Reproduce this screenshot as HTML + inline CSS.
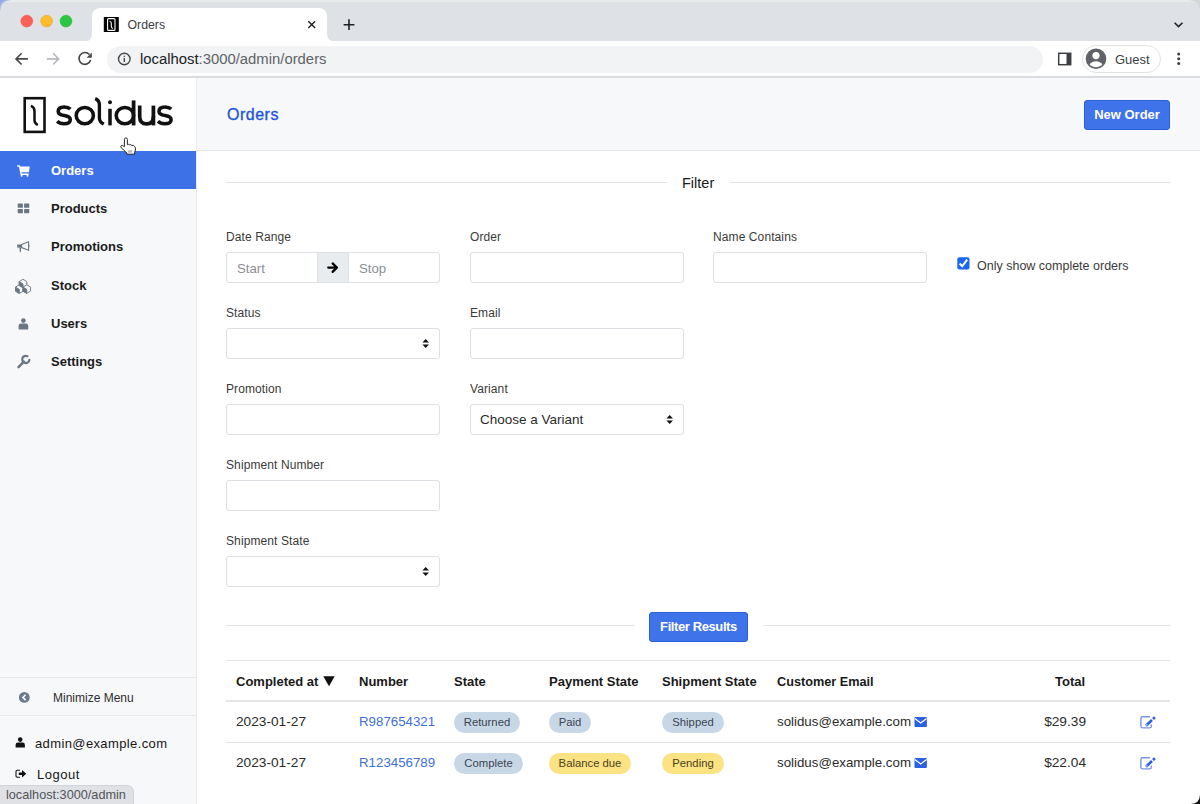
<!DOCTYPE html>
<html><head><meta charset="utf-8">
<style>
*{box-sizing:border-box;margin:0;padding:0}
html,body{width:1200px;height:804px;overflow:hidden;background:#fff;font-family:"Liberation Sans",sans-serif;color:#222}
.a{position:absolute;white-space:nowrap}
#tabbar{left:0;top:0;width:1200px;height:42px;background:#dee1e6}
#tab{left:92px;top:8px;width:235px;height:34px;background:#fff;border-radius:8px 8px 0 0}
#toolbar{left:0;top:41px;width:1200px;height:36px;background:#fff;border-bottom:1px solid #d3d5d8}
#omni{left:107px;top:46px;width:936px;height:27px;background:#f1f3f4;border-radius:14px}
#sidebar{left:0;top:77px;width:197px;height:727px;background:#f7f8fa;border-right:1px solid #e8eaed}
#logo{left:0;top:77px;width:196px;height:74px;background:#fff}
#nav-active{left:0;top:151px;width:196px;height:38px;background:#3d71e8}
.nav{position:absolute;left:51px;font-size:13px;font-weight:bold;color:#1b1b1b;line-height:15px}
#header{left:197px;top:77px;width:1003px;height:74px;background:#f7f8fa;border-bottom:1px solid #e4e6e9}
.lbl{position:absolute;font-size:12px;letter-spacing:0.1px;color:#3a3a3a;line-height:14px}
.inp{position:absolute;height:31px;width:214px;border:1px solid #dcdfe3;border-radius:3px;background:#fff}
.hr{position:absolute;height:1px;background:#e3e5e8}
.btn{position:absolute;background:#3f73e9;border:1px solid #2b5fd8;border-radius:3px;color:#fff;font-weight:bold;font-size:13px;text-align:center}
.th{position:absolute;margin-top:-1px;font-size:13px;font-weight:bold;color:#1a1a1a;line-height:15px}
.td{position:absolute;font-size:13.7px;color:#2b2b2b;line-height:16px}
.pill{position:absolute;height:21px;border-radius:11px;font-size:11.3px;color:#3a4552;text-align:center;line-height:21px;background:#c8d7e6}
.yel{background:#fbe283;color:#4a4220}
.lnk{color:#3f6fd8}
svg{position:absolute;left:0;top:0}
</style></head><body>
<div id="tabbar" class="a"></div>
<div class="a" style="left:0;top:0;width:1200px;height:2px;background:#e9eaec"></div>
<div id="tab" class="a"></div>
<div id="toolbar" class="a"></div>
<div id="omni" class="a"></div>
<div class="a" style="left:1082px;top:45px;width:79px;height:28px;border:1px solid #e3e3e3;border-radius:14px;background:#fff"></div>
<div class="a" style="left:127.5px;top:17.5px;font-size:12.3px;color:#3c4043;line-height:15px">Orders</div>
<div class="a" style="left:140px;top:51px;font-size:14.85px;color:#202124;line-height:17px">localhost<span style="color:#5f6368">:3000/admin/orders</span></div>
<div class="a" style="left:1115px;top:52px;font-size:13px;color:#3c4043;line-height:15px">Guest</div>

<div id="sidebar" class="a"></div>
<div id="logo" class="a"></div>
<div id="nav-active" class="a"></div>
<div class="nav" style="top:163px;color:#fff">Orders</div>
<div class="nav" style="top:201px">Products</div>
<div class="nav" style="top:239px">Promotions</div>
<div class="nav" style="top:278px">Stock</div>
<div class="nav" style="top:316px">Users</div>
<div class="nav" style="top:354px">Settings</div>
<div class="hr" style="left:0;top:677px;width:196px;background:#e6e8eb"></div>
<div class="hr" style="left:0;top:715px;width:196px;background:#e6e8eb"></div>
<div class="a" style="left:53px;top:691px;font-size:12px;color:#2e2e2e;line-height:14px">Minimize Menu</div>
<div class="a" style="left:35px;top:735.5px;font-size:13px;letter-spacing:0.38px;color:#161616;line-height:16px">admin@example.com</div>
<div class="a" style="left:37px;top:766.5px;font-size:13px;letter-spacing:0.5px;color:#161616;line-height:16px">Logout</div>

<div id="header" class="a"></div>
<div class="a" style="left:0;top:76px;width:1200px;height:2px;background:#d9dbde"></div>
<div class="a" style="left:227px;top:105px;font-size:16px;letter-spacing:0.5px;color:#1d55d4;line-height:19px;-webkit-text-stroke:0.35px #1d55d4">Orders</div>
<div class="btn" style="left:1084px;top:100px;width:86px;height:30px;line-height:28px">New Order</div>

<div class="hr" style="left:226px;top:182px;width:441px"></div>
<div class="a" style="left:682px;top:175px;font-size:14.5px;color:#1a1a1a;line-height:17px">Filter</div>
<div class="hr" style="left:730px;top:182px;width:440px"></div>

<div class="lbl" style="left:226px;top:230px">Date Range</div>
<div class="inp" style="left:226px;top:252px"></div>
<div class="a" style="left:317px;top:253px;width:32px;height:29px;background:#e9ecef;border-left:1px solid #dfe2e6;border-right:1px solid #dfe2e6"></div>
<div class="a" style="left:237px;top:261px;font-size:13.2px;color:#8a9096;line-height:15px">Start</div>
<div class="a" style="left:359px;top:261px;font-size:13.2px;color:#8a9096;line-height:15px">Stop</div>
<div class="lbl" style="left:470px;top:230px">Order</div>
<div class="inp" style="left:470px;top:252px"></div>
<div class="lbl" style="left:713px;top:230px">Name Contains</div>
<div class="inp" style="left:713px;top:252px"></div>
<div class="a" style="left:977px;top:259px;font-size:12.5px;color:#3a3a3a;line-height:14px">Only show complete orders</div>

<div class="lbl" style="left:226px;top:306px">Status</div>
<div class="inp" style="left:226px;top:328px"></div>
<div class="lbl" style="left:470px;top:306px">Email</div>
<div class="inp" style="left:470px;top:328px"></div>

<div class="lbl" style="left:226px;top:382px">Promotion</div>
<div class="inp" style="left:226px;top:404px"></div>
<div class="lbl" style="left:470px;top:382px">Variant</div>
<div class="inp" style="left:470px;top:404px"></div>
<div class="a" style="left:480px;top:412px;font-size:13.5px;color:#2b2b2b;line-height:16px">Choose a Variant</div>

<div class="lbl" style="left:226px;top:458px">Shipment Number</div>
<div class="inp" style="left:226px;top:480px"></div>
<div class="lbl" style="left:226px;top:534px">Shipment State</div>
<div class="inp" style="left:226px;top:556px"></div>

<div class="hr" style="left:226px;top:625px;width:408px"></div>
<div class="btn" style="left:649px;top:612px;width:99px;height:30px;line-height:28px;letter-spacing:-0.4px">Filter Results</div>
<div class="hr" style="left:763px;top:625px;width:407px"></div>

<div class="hr" style="left:226px;top:660px;width:944px"></div>
<div class="th" style="left:236px;top:675px">Completed at</div>
<div class="th" style="left:359px;top:675px">Number</div>
<div class="th" style="left:454px;top:675px">State</div>
<div class="th" style="left:549px;top:675px">Payment State</div>
<div class="th" style="left:662px;top:675px">Shipment State</div>
<div class="th" style="left:777px;top:675.5px;font-size:12.7px">Customer Email</div>
<div class="th" style="left:1055px;top:675px">Total</div>
<div class="hr" style="left:226px;top:700px;width:944px;height:2px"></div>
<div class="hr" style="left:226px;top:742px;width:944px"></div>

<div class="td" style="left:236px;top:714px">2023-01-27</div>
<div class="td lnk" style="left:359px;top:714px;font-size:13.3px">R987654321</div>
<div class="pill" style="left:454px;top:712px;width:66px">Returned</div>
<div class="pill" style="left:549px;top:712px;width:42px">Paid</div>
<div class="pill" style="left:662px;top:712px;width:62px">Shipped</div>
<div class="td" style="left:777px;top:714px;font-size:13.3px">solidus@example.com</div>
<div class="td" style="left:1026px;top:714px;width:60px;text-align:right">$29.39</div>

<div class="td" style="left:236px;top:755px">2023-01-27</div>
<div class="td lnk" style="left:359px;top:755px;font-size:13.3px">R123456789</div>
<div class="pill" style="left:454px;top:753px;width:69px">Complete</div>
<div class="pill yel" style="left:549px;top:753px;width:82px">Balance due</div>
<div class="pill yel" style="left:662px;top:753px;width:62px">Pending</div>
<div class="td" style="left:777px;top:755px;font-size:13.3px">solidus@example.com</div>
<div class="td" style="left:1026px;top:755px;width:60px;text-align:right">$22.04</div>

<!--SVG1-->
<svg width="1200" height="804" viewBox="0 0 1200 804">
<!-- traffic lights -->
<circle cx="26.8" cy="21.1" r="5.9" fill="#fe5f57" stroke="#e2463f" stroke-width="0.5"/>
<circle cx="46.6" cy="21.1" r="5.9" fill="#febc2e" stroke="#e1a116" stroke-width="0.5"/>
<circle cx="66" cy="21.1" r="5.9" fill="#28c840" stroke="#1aab29" stroke-width="0.5"/>
<!-- favicon -->
<rect x="103.8" y="17" width="15" height="15" fill="#000"/>
<rect x="107.6" y="18.6" width="7.4" height="11.8" rx="1" fill="none" stroke="#fff" stroke-width="1.1"/>
<path d="M109.6 21.2 Q111.3 21.6 111.3 23.2 V26.6 Q111.3 27.8 112.8 28.4" fill="none" stroke="#fff" stroke-width="1.1"/>
<!-- tab close & new tab -->
<path d="M308.3 21.3 L315.1 28.1 M315.1 21.3 L308.3 28.1" stroke="#202124" stroke-width="1.4"/>
<path d="M349 19.3 V30.1 M343.6 24.7 H354.4" stroke="#202124" stroke-width="1.6"/>
<!-- tab strip chevron -->
<path d="M1174.6 22.7 L1178.5 26.6 L1182.5 22.7" fill="none" stroke="#202124" stroke-width="1.6"/>
<!-- back / forward / reload -->
<path d="M27.9 58.9 H16.6 M21.6 53.3 L16 58.9 L21.6 64.5" fill="none" stroke="#474747" stroke-width="1.6"/>
<path d="M46.8 58.9 H58.1 M53.1 53.3 L58.7 58.9 L53.1 64.5" fill="none" stroke="#b7b9bc" stroke-width="1.6"/>
<path d="M90.6 60 A5.9 5.9 0 1 1 89.4 54.6" fill="none" stroke="#474747" stroke-width="1.6"/>
<path d="M91.8 52.6 V57.8 H86.6 Z" fill="#474747"/>
<!-- info -->
<circle cx="124.3" cy="59" r="5.8" fill="none" stroke="#474747" stroke-width="1.4"/>
<rect x="123.6" y="58" width="1.4" height="4" fill="#474747"/>
<circle cx="124.3" cy="56.3" r="0.8" fill="#474747"/>
<!-- side panel icon -->
<rect x="1058.7" y="53.3" width="12" height="11.4" fill="none" stroke="#3c4043" stroke-width="1.5"/>
<rect x="1066.5" y="53.3" width="4.2" height="11.4" fill="#3c4043"/>
<!-- avatar -->
<circle cx="1096" cy="58.7" r="10.3" fill="#5f6368"/>
<circle cx="1096" cy="55.6" r="3.6" fill="#fff"/>
<path d="M1089.6 64.8 Q1091.5 61.2 1096 61.2 Q1100.5 61.2 1102.4 64.8 Q1099.8 67.2 1096 67.2 Q1092.2 67.2 1089.6 64.8Z" fill="#fff"/>
<!-- dots -->
<circle cx="1178.7" cy="54" r="1.5" fill="#3c4043"/>
<circle cx="1178.7" cy="58.8" r="1.5" fill="#3c4043"/>
<circle cx="1178.7" cy="63.6" r="1.5" fill="#3c4043"/>

<!-- solidus logo -->
<g fill="none" stroke="#111" stroke-linecap="butt">
<rect x="24.7" y="98.2" width="19.8" height="33.7" stroke-width="2.60"/>
<path d="M30.9 105.9 Q34.5 107.3 34.5 111 V120.5 Q34.5 123.2 37.8 125" stroke-width="2.50"/>
<path d="M70.4 109 Q68.2 106.9 64.2 106.9 Q58.2 106.9 58.2 111.2 Q58.2 114.7 64.2 115.5 Q70.3 116.3 70.3 119.7 Q70.3 123.7 64 123.7 Q59.5 123.7 57.2 121.3" stroke-width="3.55"/>
<ellipse cx="84.8" cy="115.6" rx="8.6" ry="8.2" stroke-width="3.55"/>
<path d="M95.2 98.6 Q99.4 100.3 99.4 104.8 V118.2 Q99.4 121.8 103.8 124.1" stroke-width="3.35"/>
<path d="M110 108.8 V125.4" stroke-width="3.55"/>
<ellipse cx="124.9" cy="115.6" rx="8.7" ry="8.2" stroke-width="3.55"/>
<path d="M133.6 100.4 V125.4" stroke-width="3.75"/>
<path d="M139.7 105.6 V116.4 Q139.7 123.8 146.6 123.8 Q153.4 123.8 153.4 116.4" stroke-width="3.65"/>
<path d="M153.4 105.6 V125.4" stroke-width="3.75"/>
<path d="M171.2 109 Q169 106.9 165 106.9 Q159 106.9 159 111.2 Q159 114.7 165 115.5 Q171.1 116.3 171.1 119.7 Q171.1 123.7 164.8 123.7 Q160.3 123.7 158 121.3" stroke-width="3.55"/>
</g>
<circle cx="110" cy="102.2" r="1.95" fill="#111"/>
</svg><!--/SVG1-->
<!--SVG0-->
<svg width="1200" height="804" viewBox="0 0 1200 804">
<path d="M84 41.5 Q92 41.5 92 33.5 V41.5 Z" fill="#fff"/>
<path d="M327 33.5 Q327 41.5 335 41.5 H327 Z" fill="#fff"/>
<path d="M0 0 H11 Q0.5 0.5 0 11 Z" fill="#a9b9e6"/>
<path d="M0 0 H6 Q0.5 0.5 0 6 Z" fill="#8fa8ee"/>
<path d="M1189 0 H1200 V11 Q1199.5 0.5 1189 0 Z" fill="#d4d6d9"/>
<path d="M1200 795 V804 H1191 Q1199.5 803.5 1200 795 Z" fill="#111"/>
</svg>
<!--/SVG0-->
<!--SVG2-->
<svg width="1200" height="804" viewBox="0 0 1200 804">
<!-- nav icons -->
<g fill="#fff">
<path d="M17.2 165.2 H19.6 L20.3 166.4 H29.8 L28.9 172.2 H21.4 L21.7 173.6 H28.6 V175 H20.6 L19 166.7 H17.2 Z"/>
<circle cx="21.6" cy="175.7" r="1"/><circle cx="27.5" cy="175.7" r="1"/>
</g>
<g fill="#6b7684">
<rect x="17.7" y="203.5" width="5.2" height="4.3" rx="0.6"/><rect x="24.1" y="203.5" width="5.2" height="4.3" rx="0.6"/>
<rect x="17.7" y="208.9" width="5.2" height="4.3" rx="0.6"/><rect x="24.1" y="208.9" width="5.2" height="4.3" rx="0.6"/>
<path d="M17.2 244.5 H21.6 V247.6 H17.2 Z"/>
<path d="M19.4 247.4 H21.2 L20.8 252.2 H19.8 Z"/>
<path d="M21.6 244.5 L28.6 241.8 V250.2 L21.6 247.6 Z" fill="none" stroke="#6b7684" stroke-width="1.1"/>
<path d="M28.6 244.8 Q29.8 246 28.6 247.3" fill="none" stroke="#6b7684" stroke-width="0.9"/>
</g>
<!-- cubes -->
<g fill="#6b7684" stroke="#6b7684" stroke-width="0.9" stroke-linejoin="round">
<path d="M19.2 281.6 L23 279.3 L26.8 281.6 V285.6 L23 287.9 L19.2 285.6 Z" fill="#f7f8fa"/>
<path d="M15.5 287.1 L19.3 284.8 L23.1 287.1 V291.1 L19.3 293.4 L15.5 291.1 Z" fill="#f7f8fa"/>
<path d="M23 287.1 L26.8 284.8 L30.6 287.1 V291.1 L26.8 293.4 L23 291.1 Z" fill="#f7f8fa"/>
<path d="M19.2 281.6 L23 283.9 V287.9 L19.2 285.6 Z"/>
<path d="M15.5 287.1 L19.3 289.4 V293.4 L15.5 291.1 Z"/>
<path d="M23 287.1 L26.8 289.4 V293.4 L23 291.1 Z"/>
</g>
<!-- user -->
<g fill="#6b7684">
<circle cx="23.4" cy="320.6" r="2.3"/>
<path d="M18.6 329.4 V326.2 Q18.6 323.4 21.2 323.4 H25.6 Q28.2 323.4 28.2 326.2 V329.4 Z"/>
</g>
<!-- wrench -->
<g fill="none" stroke="#6b7684" stroke-linecap="round">
<path d="M18.5 367.2 L23.9 361.6" stroke-width="2.4"/>
<path d="M27.4 356.2 A3.6 3.6 0 1 0 29.4 359.9" stroke-width="2.2"/>
</g>
<!-- minimize chevron circle -->
<circle cx="24.3" cy="697.4" r="5.4" fill="#6b7a8c"/>
<path d="M25.6 694.7 L22.9 697.4 L25.6 700.1" fill="none" stroke="#fff" stroke-width="1.6"/>
<!-- admin user icon -->
<g fill="#111">
<circle cx="20.2" cy="739.6" r="2.3"/>
<path d="M15.6 747.4 V745 Q15.6 742.6 18 742.6 H22.6 Q24.9 742.6 24.9 745 V747.4 Z"/>
</g>
<!-- logout icon -->
<path d="M20 770.2 H17.2 Q16 770.2 16 771.4 V776 Q16 777.2 17.2 777.2 H20" fill="none" stroke="#111" stroke-width="1.1"/>
<path d="M18.8 772.4 H22 V770 L26.3 773.7 L22 777.4 V775 H18.8 Z" fill="#111"/>

<!-- date range arrow -->
<path d="M328.2 267.6 H337 M332.6 263.4 L336.9 267.6 L332.6 271.9" fill="none" stroke="#000" stroke-width="2.2" stroke-linecap="round" stroke-linejoin="round"/>
<!-- select arrows -->
<g fill="#111">
<path d="M422.4 342.4 L425.7 338.9 L429 342.4 Z"/><path d="M422.4 344.6 L425.7 348.1 L429 344.6 Z"/>
<path d="M422.4 570.4 L425.7 566.9 L429 570.4 Z"/><path d="M422.4 572.6 L425.7 576.1 L429 572.6 Z"/>
<path d="M666.4 418.4 L669.7 414.9 L673 418.4 Z"/><path d="M666.4 420.6 L669.7 424.1 L673 420.6 Z"/>
</g>
<!-- checkbox -->
<rect x="957.3" y="257.2" width="12.2" height="12.2" rx="2" fill="#1a66f2"/>
<path d="M959.6 263.5 L962.2 266.3 L967.2 259.6" fill="none" stroke="#fff" stroke-width="2"/>
<!-- table sort triangle -->
<path d="M323.3 676.3 H334.7 L329 686.3 Z" fill="#111"/>
<!-- envelopes -->
<g>
<rect x="914.5" y="717" width="12.4" height="10" rx="0.9" fill="#2c62e0"/>
<path d="M914.8 718.4 L920.7 722.9 L926.6 718.4" fill="none" stroke="#fff" stroke-width="1.2"/>
<rect x="914.5" y="758" width="12.4" height="10" rx="0.9" fill="#2c62e0"/>
<path d="M914.8 759.4 L920.7 763.9 L926.6 759.4" fill="none" stroke="#fff" stroke-width="1.2"/>
</g>
<!-- edit icons -->
<g fill="none">
<path d="M1150.1 716.8 H1142.5 Q1140.9 716.8 1140.9 718.4 V726.3 Q1140.9 727.9 1142.5 727.9 H1149.7 Q1151.3 727.9 1151.3 726.3 V724.5" stroke="#7d93e6" stroke-width="1.4"/>
<path d="M1146.0 725.8 L1152.0 720.0" stroke="#2a5fe0" stroke-width="2.6"/><path d="M1153.0 719.0 L1154.9 717.2" stroke="#2a5fe0" stroke-width="2.6"/><circle cx="1146.9" cy="724.9" r="0.7" fill="#fff"/>
<path d="M1150.1 757.8 H1142.5 Q1140.9 757.8 1140.9 759.4 V767.3 Q1140.9 768.9 1142.5 768.9 H1149.7 Q1151.3 768.9 1151.3 767.3 V765.5" stroke="#7d93e6" stroke-width="1.4"/>
<path d="M1146.0 766.8 L1152.0 761.0" stroke="#2a5fe0" stroke-width="2.6"/><path d="M1153.0 760.0 L1154.9 758.2" stroke="#2a5fe0" stroke-width="2.6"/><circle cx="1146.9" cy="765.9" r="0.7" fill="#fff"/>
</g>
<!-- cursor -->
<path d="M124.4 139.6 Q124.4 137.9 125.9 137.9 Q127.4 137.9 127.4 139.6 V144.6 Q128.6 144 129.6 144.8 Q131 144.2 131.8 145.4 Q133.4 145 134.6 146.4 Q135.8 147.6 135.4 150 L134.6 152.6 V154.2 H126.8 V153 Q125.8 151.8 124.2 150.4 L121.2 147.8 Q120.2 146.6 121.2 145.8 Q122.4 145 124.4 146.6 Z" fill="#fff" stroke="#111" stroke-width="0.9" stroke-linejoin="round"/>
<rect x="127.8" y="150.3" width="4.4" height="2.4" fill="#b9b9b9"/>
</svg><!--/SVG2-->
<div class="a" style="left:0;top:785px;width:134px;height:19px;background:#dfe1e5;border-radius:0 7px 0 0;border:1px solid #d0d3d7;border-left:0;border-bottom:0"></div>
<div class="a" style="left:6px;top:788px;font-size:12.7px;color:#505458;line-height:15px">localhost:3000/admin</div>
